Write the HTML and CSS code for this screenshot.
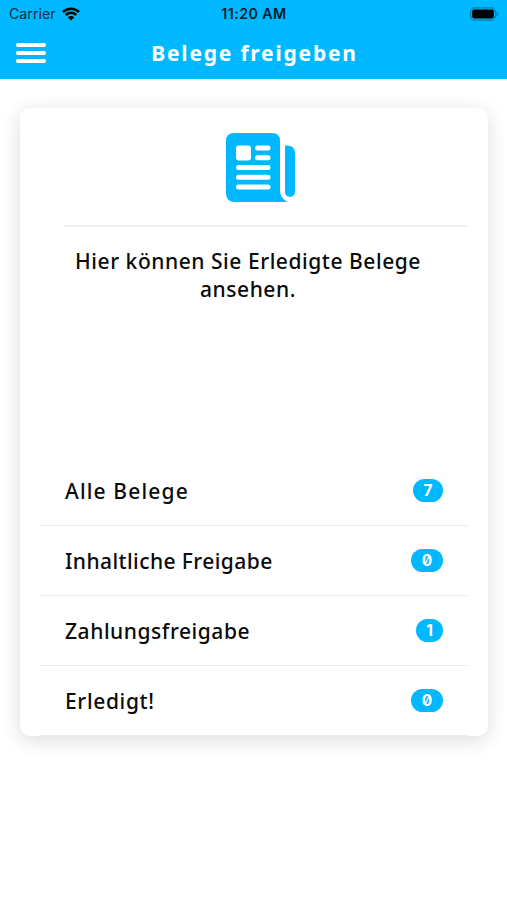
FILE: index.html
```html
<!DOCTYPE html>
<html lang="de">
<head>
  <meta charset="UTF-8" />
  <meta name="viewport" content="width=device-width, initial-scale=1" />
  <title>Belege freigeben</title>
  <link rel="stylesheet" href="styles.css">
</head>
<body>
  <header class="header">
    <div class="statusbar">
      <div class="carrier">
        <span>Carrier</span>
        <svg class="wifi" viewBox="0 0 18 14">
          <path d="M1 5.1a11.4 11.4 0 0 1 16 0" />
          <path d="M3.8 8a7.4 7.4 0 0 1 10.4 0" />
          <path class="dot" d="M5.7 10.3a4.7 4.7 0 0 1 6.6 0L9 13.6z" />
        </svg>
      </div>
      <span class="clock">11:20 AM</span>
      <svg class="battery" viewBox="0 0 30 14">
        <rect class="shell" x="0.7" y="0.7" width="25.6" height="12.6" rx="4" />
        <rect x="2.2" y="2.4" width="22.5" height="9.2" rx="2.2" />
        <path class="cap" d="M27.4 4.8q1.9.6 1.9 2.2t-1.9 2.2z" />
      </svg>
    </div>
    <div class="toolbar">
      <button class="menu" aria-label="Menü"><i></i><i></i><i></i></button>
      <h1 class="title">Belege freigeben</h1>
    </div>
  </header>

  <main class="card">
    <div class="card-icon">
      <svg class="news" viewBox="0 0 70 70">
        <path d="M8 0h38q8 0 8 8v50q0 6 7 11H9q-9 0-9-9V8q0-8 8-8z" />
        <path d="M59 12.5h2q8 0 8 8V59a5 5 0 0 1-10 0z" />
        <g class="paper">
          <rect x="10" y="12.5" width="15" height="15" rx="3" />
          <rect x="29" y="12.5" width="15.5" height="5" rx="2.5" />
          <rect x="29" y="22.3" width="15.5" height="5" rx="2.5" />
          <rect x="10" y="32" width="34.5" height="5" rx="2.5" />
          <rect x="10" y="41.8" width="34.5" height="5" rx="2.5" />
          <rect x="10" y="51.5" width="34.5" height="5" rx="2.5" />
        </g>
      </svg>
    </div>
    <p class="sentence">Hier können Sie Erledigte Belege<br>ansehen.</p>
    <ul class="list">
      <li><span class="label alle">Alle Belege</span><span class="badge seven">7</span></li>
      <li><span class="label inhalt">Inhaltliche Freigabe</span><span class="badge">0</span></li>
      <li><span class="label zahlung">Zahlungsfreigabe</span><span class="badge one">1</span></li>
      <li><span class="label erledigt">Erledigt!</span><span class="badge">0</span></li>
    </ul>
  </main>
</body>
</html>
```

FILE: styles.css
```css
* { box-sizing: border-box; }
body {
  min-height: 100vh;
  margin: 0;
  background: #fff;
  color: #0b0b0b;
  font-family: "Noto Sans", sans-serif;
}
.header {
  height: 79px;
  background: #00b8ff;
}
.statusbar {
  display: grid;
  grid-template-columns: 1fr auto 1fr;
  align-items: center;
  height: 27px;
  padding: 0 8px 0 9px;
  font: 14.2px/27px Inter, sans-serif;
}
.carrier {
  display: flex;
  align-items: center;
  gap: 6px;
  color: #06303f;
}
.wifi { width: 18px; height: 14px; fill: none; stroke: #000; stroke-width: 2.5; }
.wifi .dot { fill: #000; stroke: none; }
.clock { font-weight: 600; letter-spacing: 0.45px; color: #02202b; }
.battery { width: 29px; height: 14px; justify-self: end; }
.battery .shell { fill: none; stroke: #087ba6; stroke-width: 1.2; }
.battery .cap { fill: #087ba6; }
.toolbar {
  display: grid;
  grid-template-columns: 30px 1fr 30px;
  align-items: center;
  height: 51px;
  padding: 0 16px;
}
.menu {
  display: flex;
  flex-direction: column;
  gap: 4px;
  width: 30px;
  padding: 0;
  border: none;
  background: none;
}
.menu i { height: 4px; border-radius: 2px; background: #fff; }
.title {
  margin: 0;
  padding: 1px 0 0 2px;
  color: #fff;
  font-size: 21px;
  font-weight: 700;
  line-height: 51px;
  letter-spacing: 1.8px;
  text-align: center;
  white-space: nowrap;
}
.card {
  height: 628px;
  margin: 29px 19px 0 20px;
  padding: 0 20px;
  border-radius: 10px;
  background: #fff;
  box-shadow: 0 4px 20px rgba(0, 0, 0, 0.14);
}
.card-icon {
  height: 119px;
  margin-left: 24px;
  padding: 24.5px 0 0 161.5px;
  border-bottom: 2px solid #f1f1f1;
}
.news { display: block; width: 70px; height: 70px; fill: #00b8ff; }
.news .paper { fill: #fff; }
.sentence {
  height: 229px;
  margin: 0;
  padding: 20px 12px 0 0;
  font-size: 21px;
  font-weight: 500;
  line-height: 28px;
  letter-spacing: 0.55px;
  text-align: center;
  white-space: nowrap;
}
.list { margin: 0; padding: 0; list-style: none; }
.list li {
  display: flex;
  align-items: center;
  justify-content: space-between;
  height: 70px;
  padding: 0 25px;
  border-bottom: 1.5px solid #eee;
}
.label { font-size: 21px; font-weight: 500; white-space: nowrap; }
.label.alle { letter-spacing: 1.15px; }
.label.inhalt { letter-spacing: 0.42px; }
.label.zahlung { letter-spacing: 0.55px; }
.label.erledigt { letter-spacing: 0.65px; }
.badge {
  width: 32px;
  height: 23px;
  border-radius: 12px;
  background: #00b8ff;
  color: #fff;
  font: 700 15.5px/23px Inter, sans-serif;
  font-feature-settings: "zero";
  text-align: center;
}
.badge.seven { width: 30px; }
.badge.one { width: 27px; }
```
